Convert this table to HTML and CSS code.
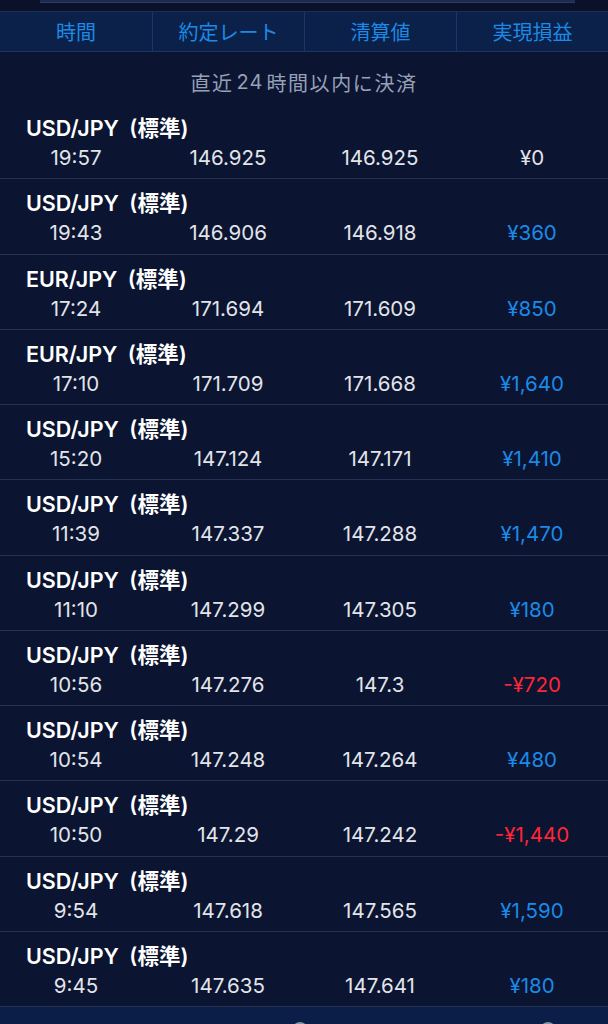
FILE: index.html
```html
<!DOCTYPE html>
<html lang="ja">
<head>
<meta charset="utf-8">
<link rel="stylesheet" href="styles.css">
</head>
<body>
<div class="app">
  <div class="topstrip"><div class="topbox"></div></div>
  <div class="tabs">
    <div class="tab">時間</div>
    <div class="tab">約定レート</div>
    <div class="tab">清算値</div>
    <div class="tab">実現損益</div>
  </div>
  <div class="caption">直近<span class="num">24</span>時間以内に決済</div>
  <div class="list">
    <div class="row"><div class="pair">USD/JPY (標準)</div><div class="vals"><span>19:57</span><span>146.925</span><span>146.925</span><span class="zero">¥0</span></div></div>
    <div class="row"><div class="pair">USD/JPY (標準)</div><div class="vals"><span>19:43</span><span>146.906</span><span>146.918</span><span class="pos">¥360</span></div></div>
    <div class="row"><div class="pair">EUR/JPY (標準)</div><div class="vals"><span>17:24</span><span>171.694</span><span>171.609</span><span class="pos">¥850</span></div></div>
    <div class="row"><div class="pair">EUR/JPY (標準)</div><div class="vals"><span>17:10</span><span>171.709</span><span>171.668</span><span class="pos">¥1,640</span></div></div>
    <div class="row"><div class="pair">USD/JPY (標準)</div><div class="vals"><span>15:20</span><span>147.124</span><span>147.171</span><span class="pos">¥1,410</span></div></div>
    <div class="row"><div class="pair">USD/JPY (標準)</div><div class="vals"><span>11:39</span><span>147.337</span><span>147.288</span><span class="pos">¥1,470</span></div></div>
    <div class="row"><div class="pair">USD/JPY (標準)</div><div class="vals"><span>11:10</span><span>147.299</span><span>147.305</span><span class="pos">¥180</span></div></div>
    <div class="row"><div class="pair">USD/JPY (標準)</div><div class="vals"><span>10:56</span><span>147.276</span><span>147.3</span><span class="neg">-¥720</span></div></div>
    <div class="row"><div class="pair">USD/JPY (標準)</div><div class="vals"><span>10:54</span><span>147.248</span><span>147.264</span><span class="pos">¥480</span></div></div>
    <div class="row"><div class="pair">USD/JPY (標準)</div><div class="vals"><span>10:50</span><span>147.29</span><span>147.242</span><span class="neg">-¥1,440</span></div></div>
    <div class="row"><div class="pair">USD/JPY (標準)</div><div class="vals"><span>9:54</span><span>147.618</span><span>147.565</span><span class="pos">¥1,590</span></div></div>
    <div class="row"><div class="pair">USD/JPY (標準)</div><div class="vals"><span>9:45</span><span>147.635</span><span>147.641</span><span class="pos">¥180</span></div></div>
  </div>
  <div class="tabbar">
    <svg class="ico i1" width="20" height="20" viewBox="0 0 20 20"><path d="M10 15 L10 20" stroke="#8a93a6" stroke-width="2"/></svg>
    <svg class="ico i2" width="20" height="20" viewBox="0 0 20 20"><circle cx="10" cy="18" r="7" fill="none" stroke="#8a93a6" stroke-width="2"/></svg>
    <svg class="ico i3" width="20" height="20" viewBox="0 0 20 20"><path d="M10 14 L10 20" stroke="#8a93a6" stroke-width="2"/></svg>
    <svg class="ico i4" width="20" height="20" viewBox="0 0 20 20"><circle cx="10" cy="18" r="7" fill="none" stroke="#8a93a6" stroke-width="2"/></svg>
  </div>
</div>
</body>
</html>
```

FILE: styles.css
```css
html, body {
  margin: 0;
  padding: 0;
  background: #0b1430;
}
.app {
  width: 608px;
  height: 1024px;
  overflow: hidden;
  font-family: Inter, "Liberation Sans", "Noto Sans CJK JP", sans-serif;
  color: #e6e8ee;
  display: flex;
  flex-direction: column;
}
.topstrip {
  height: 11px;
  background: #0a1128;
  box-sizing: border-box;
  padding: 0 33px 0 40px;
}
.topbox {
  height: 2px;
  background: #1d2a52;
  border-bottom: 1px solid #2a3a6a;
}
.tabs {
  height: 41px;
  display: grid;
  grid-template-columns: repeat(4, 1fr);
  background: #0b2149;
  border-top: 1px solid #16305e;
  border-bottom: 1px solid #1a3566;
  box-sizing: border-box;
}
.tab {
  display: flex;
  align-items: center;
  justify-content: center;
  font-family: "Noto Sans CJK JP", sans-serif;
  font-size: 20px;
  color: #1b8ae6;
  border-left: 1px solid #1b3767;
}
.tab:first-child {
  border-left: none;
}
.caption {
  height: 52px;
  display: flex;
  align-items: center;
  justify-content: center;
  font-family: "Noto Sans CJK JP", sans-serif;
  font-size: 20px;
  letter-spacing: 1.6px;
  color: #97a0b7;
  padding-top: 8px;
  box-sizing: border-box;
}
.caption .num {
  font-family: Inter, "Liberation Sans", sans-serif;
  margin: 0 3px;
  letter-spacing: 1px;
}
.list {
  display: flex;
  flex-direction: column;
}
.row {
  height: 75.25px;
  box-sizing: border-box;
  border-bottom: 1px solid #263050;
  position: relative;
}
.pair {
  position: absolute;
  left: 26px;
  top: 11px;
  font-size: 21.5px;
  font-weight: 600;
  word-spacing: 5px;
  color: #ffffff;
  line-height: 26px;
}
.vals {
  position: absolute;
  left: 0;
  right: 0;
  top: 42px;
  display: grid;
  grid-template-columns: repeat(4, 1fr);
  font-size: 20.5px;
  line-height: 24px;
  color: #e2e4ea;
}
.vals span {
  text-align: center;
}
.pos { color: #1b8ae6; }
.neg { color: #ff2536; }
.zero { color: #e2e4ea; }
.tabbar {
  flex: 1;
  background: #0a1e47;
  position: relative;
}
.ico {
  position: absolute;
  top: 5px;
}
.i1 { left: 50px; }
.i2 { left: 290px; }
.i3 { left: 415px; }
.i4 { left: 538px; }
```
